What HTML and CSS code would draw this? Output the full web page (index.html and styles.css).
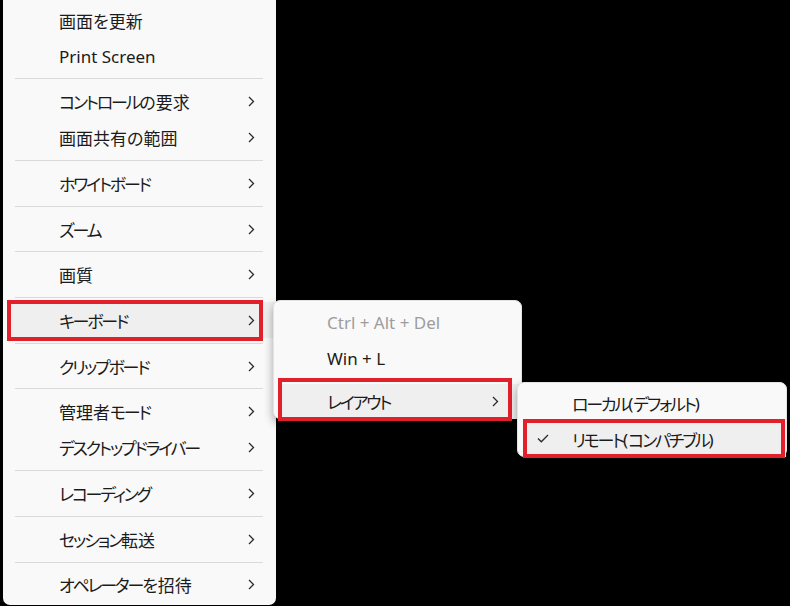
FILE: index.html
```html
<!DOCTYPE html>
<html lang="ja">
<head>
<meta charset="utf-8">
<link rel="stylesheet" href="styles.css">
</head>
<body>
<div class="desk">
  <div class="menu main">
    <div class="item">画面を更新</div>
    <div class="item">Print Screen</div>
    <div class="sep"></div>
    <div class="item sub"><span><span class="k">コントロール</span>の要求</span><svg class="chev" viewBox="0 0 7 11"><path d="M1 1 L5.5 5.5 L1 10"/></svg></div>
    <div class="item sub"><span>画面共有の範囲</span><svg class="chev" viewBox="0 0 7 11"><path d="M1 1 L5.5 5.5 L1 10"/></svg></div>
    <div class="sep"></div>
    <div class="item sub"><span class="k">ホワイトボード</span><svg class="chev" viewBox="0 0 7 11"><path d="M1 1 L5.5 5.5 L1 10"/></svg></div>
    <div class="sep"></div>
    <div class="item sub"><span class="k">ズーム</span><svg class="chev" viewBox="0 0 7 11"><path d="M1 1 L5.5 5.5 L1 10"/></svg></div>
    <div class="sep"></div>
    <div class="item sub"><span>画質</span><svg class="chev" viewBox="0 0 7 11"><path d="M1 1 L5.5 5.5 L1 10"/></svg></div>
    <div class="sep"></div>
    <div class="item sub active mark-main"><span class="k">キーボード</span><svg class="chev" viewBox="0 0 7 11"><path d="M1 1 L5.5 5.5 L1 10"/></svg></div>
    <div class="sep"></div>
    <div class="item sub"><span class="k">クリップボード</span><svg class="chev" viewBox="0 0 7 11"><path d="M1 1 L5.5 5.5 L1 10"/></svg></div>
    <div class="sep"></div>
    <div class="item sub"><span>管理者<span class="k">モード</span></span><svg class="chev" viewBox="0 0 7 11"><path d="M1 1 L5.5 5.5 L1 10"/></svg></div>
    <div class="item sub"><span class="k">デスクトップドライバー</span><svg class="chev" viewBox="0 0 7 11"><path d="M1 1 L5.5 5.5 L1 10"/></svg></div>
    <div class="sep"></div>
    <div class="item sub"><span class="k">レコーディング</span><svg class="chev" viewBox="0 0 7 11"><path d="M1 1 L5.5 5.5 L1 10"/></svg></div>
    <div class="sep"></div>
    <div class="item sub"><span><span class="k">セッション</span>転送</span><svg class="chev" viewBox="0 0 7 11"><path d="M1 1 L5.5 5.5 L1 10"/></svg></div>
    <div class="sep"></div>
    <div class="item sub"><span><span class="k">オペレーター</span>を招待</span><svg class="chev" viewBox="0 0 7 11"><path d="M1 1 L5.5 5.5 L1 10"/></svg></div>
  </div>

  <div class="menu flyout keyboard">
    <div class="item disabled">Ctrl + Alt + Del</div>
    <div class="item">Win + L</div>
    <div class="gap"></div>
    <div class="item sub active mark-kb"><span class="k">レイアウト</span><svg class="chev" viewBox="0 0 7 11"><path d="M1 1 L5.5 5.5 L1 10"/></svg></div>
  </div>

  <div class="menu flyout layout">
    <div class="item"><span class="k">ローカル</span>(<span class="k">デフォルト</span>)</div>
    <div class="item active mark-layout"><svg class="check" viewBox="0 0 12 9"><path d="M1 4.5 L4.3 7.8 L11 1"/></svg><span class="k">リモート</span>(<span class="k">コンパチブル</span>)</div>
  </div>
</div>
</body>
</html>
```

FILE: styles.css
```css
html, body {
  margin: 0;
  padding: 0;
  background: #000;
}

body {
  width: 790px;
  height: 606px;
  overflow: hidden;
  font-family: "Noto Sans", "Noto Sans CJK JP", sans-serif;
  font-size: 17px;
  color: #1b1b1b;
  font-feature-settings: "palt";
}

.desk {
  position: relative;
  width: 790px;
  height: 606px;
}

.menu {
  background: #f9f9f9;
  box-sizing: border-box;
}

.main {
  margin-left: 3px;
  width: 273px;
  padding: 2px 0 2px;
  border-radius: 0 0 7px 7px;
}

.item {
  position: relative;
  height: 36px;
  display: flex;
  align-items: center;
  padding-left: 56px;
  padding-right: 21px;
  white-space: nowrap;
}

.item.sub {
  justify-content: space-between;
}

.k {
  letter-spacing: -2.2px;
}

.sep {
  height: 1px;
  background: #dadada;
  margin: 4.35px 13px 4.35px 12px;
}

.gap {
  height: 8px;
}

.chev {
  width: 7px;
  height: 11px;
  flex: none;
  fill: none;
  stroke: #2a2a2a;
  stroke-width: 1.3;
}

.active {
  background: #efefef;
}

.active::after {
  content: "";
  position: absolute;
  border: 4px solid #e2202c;
  pointer-events: none;
}

.mark-main {
  margin: 0 0 0 4px;
  padding-left: 52px;
}

.mark-main::after {
  left: 0;
  right: 13px;
  top: -2.5px;
  bottom: -2.5px;
}

.flyout {
  position: absolute;
  border-radius: 7px;
  border: 1px solid #e3e3e3;
  box-shadow: 0 4px 10px rgba(0, 0, 0, 0.35);
}

.keyboard {
  left: 273px;
  top: 300px;
  width: 249px;
  height: 119px;
  padding-top: 3px;
}

.keyboard .item {
  padding-left: 53px;
  padding-right: 22px;
}

.disabled {
  color: #9d9d9d;
}

.keyboard .mark-kb {
  margin: 0 0 0 4px;
  padding-left: 49px;
  height: 35px;
}

.mark-kb::after {
  left: 0;
  right: 9px;
  top: -6px;
  bottom: -2px;
}

.layout {
  left: 517px;
  top: 382px;
  width: 270px;
  height: 75px;
  padding-top: 2px;
}

.layout .item {
  padding-left: 54px;
}

.mark-layout {
  margin-left: 5px;
  padding-left: 49px !important;
}

.mark-layout::after {
  left: 0;
  right: 1px;
  top: -2px;
  bottom: -1px;
}

.check {
  position: absolute;
  left: 14px;
  top: 13px;
  width: 12px;
  height: 9px;
  fill: none;
  stroke: #2a2a2a;
  stroke-width: 1.3;
}
```
